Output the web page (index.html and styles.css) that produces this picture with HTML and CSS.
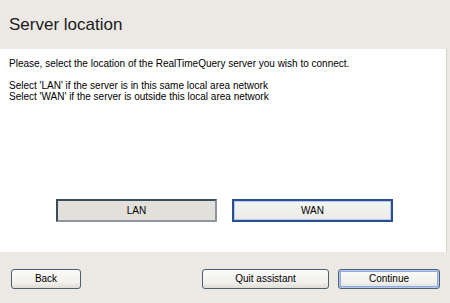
FILE: index.html
```html
<!DOCTYPE html>
<html lang="en">
<head>
    <meta charset="UTF-8">
    <title>Server location</title>
    <link rel="stylesheet" href="styles.css">
</head>
<body>
    <div class="wizard">
        <div class="wizard-header">
            <h1 class="wizard-title">Server location</h1>
        </div>
        <div class="wizard-body">
            <p class="intro">Please, select the location of the RealTimeQuery server you wish to connect.</p>
            <p class="hint">Select 'LAN' if the server is in this same local area network<br>Select 'WAN' if the server is outside this local area network</p>
            <div class="choices">
                <button class="choice pressed">LAN</button>
                <button class="choice focused">WAN</button>
            </div>
        </div>
        <div class="wizard-footer">
            <button class="nav-button back">Back</button>
            <div class="footer-right">
                <button class="nav-button quit">Quit assistant</button>
                <button class="nav-button continue">Continue</button>
            </div>
        </div>
    </div>
</body>
</html>
```

FILE: styles.css
```css
body {
    margin: 0;
    background-color: #ece9e5;
    font-family: "Liberation Sans", Arial, sans-serif;
    color: #000;
}

.wizard {
    width: 450px;
    height: 303px;
    display: flex;
    flex-direction: column;
}

.wizard-header {
    height: 49px;
    display: flex;
    align-items: center;
    padding-left: 9px;
}

.wizard-title {
    margin: 0;
    font-size: 17px;
    font-weight: normal;
    color: #1a1a1a;
}

.wizard-body {
    width: 447px;
    height: 203px;
    box-sizing: border-box;
    background-color: #fff;
    border-right: 1px solid #d8d5cf;
    padding: 9px 0 0 9px;
    font-size: 10px;
    display: flex;
    flex-direction: column;
}

.intro {
    margin: 0;
    line-height: 11px;
}

.hint {
    margin: 11px 0 0 0;
    line-height: 11px;
}

.choices {
    display: flex;
    gap: 15px;
    margin-top: 97px;
    padding-left: 47px;
}

.choice {
    width: 161px;
    height: 23px;
    font-family: "Liberation Sans", Arial, sans-serif;
    font-size: 10px;
    color: #000;
    cursor: pointer;
}

.choice.pressed {
    background-color: #e2e0da;
    border: 2px solid #3b4a5c;
    border-right-color: #8d959e;
    border-bottom-color: #8d959e;
}

.choice.focused {
    background: linear-gradient(#f4f4f2, #ecebe6);
    border: 2px solid #2c4f94;
    box-shadow: inset 0 0 0 1px #b6c9ef;
}

.wizard-footer {
    flex: 1;
    display: flex;
    justify-content: space-between;
    align-items: center;
    padding: 2px 10px 0 11px;
}

.footer-right {
    display: flex;
    gap: 9px;
}

.nav-button {
    height: 20px;
    font-family: "Liberation Sans", Arial, sans-serif;
    font-size: 10px;
    color: #000;
    border: 1px solid #4e5e71;
    border-radius: 3px;
    background: linear-gradient(#fbfbf9, #f1f0ec 70%, #dedcd5);
    cursor: pointer;
}

.back {
    width: 70px;
}

.quit {
    width: 127px;
}

.continue {
    width: 102px;
    box-shadow: inset 0 0 0 1px #b4c8ee, inset 0 0 0 2px #8daae6;
}
```
